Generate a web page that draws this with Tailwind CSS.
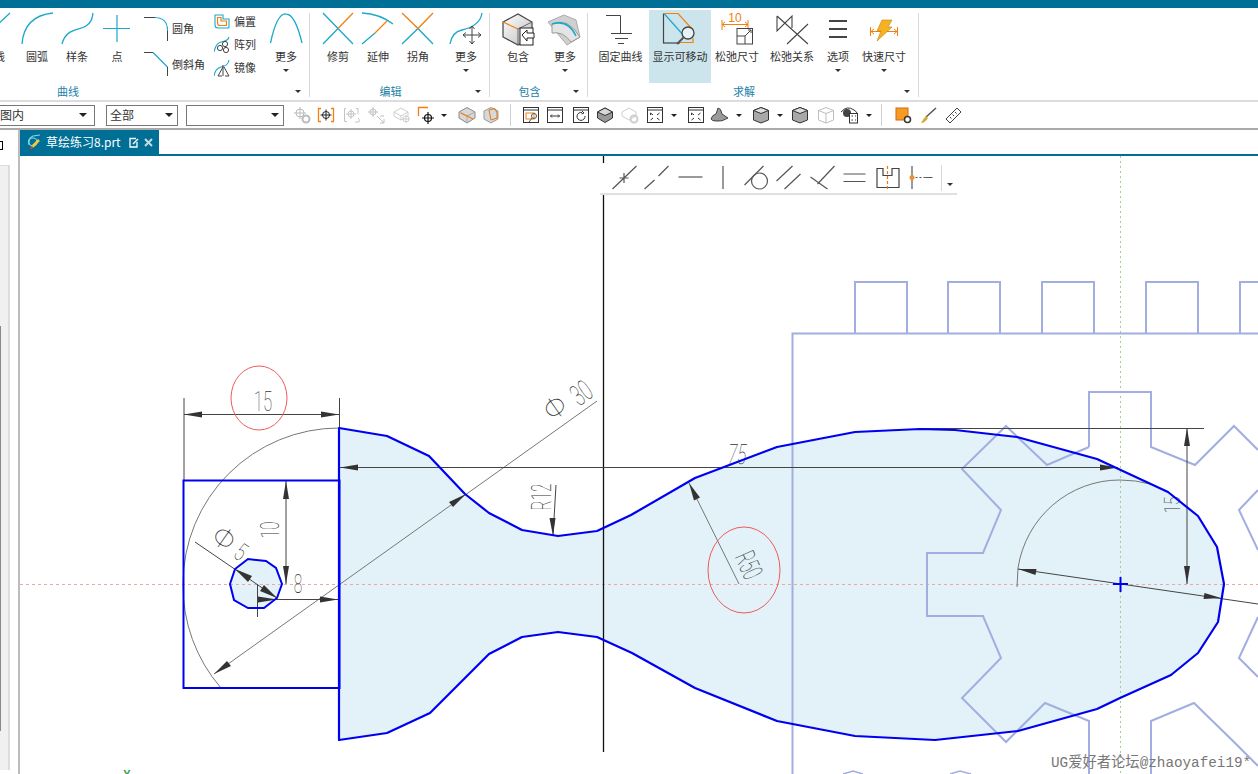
<!DOCTYPE html>
<html lang="zh-CN">
<head>
    <meta charset="UTF-8">
    <title>草绘练习8.prt</title>
    <script src="https://cdn.jsdelivr.net/npm/@tailwindcss/browser@4"></script>
</head>
<body class="bg-white">
<div class="w-[1258px] h-[774px] overflow-hidden flex flex-col bg-white text-[11px] leading-none text-[#333] font-['Noto_Sans_CJK_SC','Noto_Sans',sans-serif]">
    <div class="h-2 shrink-0 bg-[#006f96]"></div>

    <!-- ribbon -->
    <div class="h-[94px] shrink-0 flex border-b-2 border-[#dcdcdc] bg-white">
        <!-- 曲线 -->
        <div class="w-[464px] ml-[-155px] shrink-0 h-[90px] mt-[2px] flex flex-col relative">
            <div class="h-[73px] shrink-0 flex justify-end">
                <div class="w-[46px] flex flex-col items-center">
                    <svg class="w-[46px] h-[38px]" viewBox="-29 10 46 38" fill="none"><path d="M-4 26 L10 13" stroke="#1aa8cc" stroke-width="1.3"/></svg>
                    <span class="h-[16px] leading-[16px]">直线</span>
                </div>
                <div class="w-10 flex flex-col items-center">
                    <svg class="w-10 h-[38px]" viewBox="17 10 40 38" fill="none"><path d="M22 44 Q24 16 53 13" stroke="#1aa8cc" stroke-width="1.3"/></svg>
                    <span class="h-[16px] leading-[16px]">圆弧</span>
                </div>
                <div class="w-10 flex flex-col items-center">
                    <svg class="w-10 h-[38px]" viewBox="57 10 40 38" fill="none"><path d="M62 44 C66 28 80 30 86 26 C92 22 92 18 93 13" stroke="#1aa8cc" stroke-width="1.3"/></svg>
                    <span class="h-[16px] leading-[16px]">样条</span>
                </div>
                <div class="w-10 flex flex-col items-center">
                    <svg class="w-10 h-[38px]" viewBox="97 10 40 38" fill="none"><path d="M103 28.500 H130 M117 15 V42" stroke="#1aa8cc" stroke-width="1.2"/></svg>
                    <span class="h-[16px] leading-[16px]">点</span>
                </div>
                <div class="w-[77px] flex flex-col">
                    <div class="h-[35px] flex items-center pl-[7px] pt-[2px]">
                        <svg class="w-[24px] h-[26px] shrink-0" viewBox="144 16 24 26" fill="none"><path d="M144 17.500 H155" stroke="#444"/><path d="M155 17.500 Q168 18 167.500 31" stroke="#1aa8cc" stroke-width="1.2"/><path d="M167.500 31 V41" stroke="#444"/></svg>
                        <span class="ml-[4px]">圆角</span>
                    </div>
                    <div class="h-[35px] flex items-center pl-[7px] pt-[3px]">
                        <svg class="w-[24px] h-[26px] shrink-0" viewBox="144 51 24 26" fill="none"><path d="M144 52.500 H153" stroke="#444"/><path d="M153 52.500 L167.500 67" stroke="#1aa8cc" stroke-width="1.2"/><path d="M167.500 67 V76" stroke="#444"/></svg>
                        <span class="ml-[4px]">倒斜角</span>
                    </div>
                </div>
                <div class="w-[52px] flex flex-col">
                    <div class="h-[23px] flex items-center">
                        <svg class="w-[16px] h-[16px] shrink-0" viewBox="214 14 16 16" fill="none"><path d="M215 15 H223 V19 H229 V27 Q229 28 228 28 H218 Q215 28 215 25 Z" stroke="#1aa8cc" stroke-width="1.1"/><path d="M217.500 17.500 H221 V21 H226.500 V25.500 H220 Q217.500 25.500 217.500 23 Z" stroke="#f08010" stroke-width="1.2"/></svg>
                        <span class="ml-[4px]">偏置</span>
                    </div>
                    <div class="h-[23px] flex items-center">
                        <svg class="w-[16px] h-[18px] shrink-0" viewBox="214 35 16 18" fill="none"><path d="M214 51 Q216 42 221 41 Q228 40 229 36" stroke="#1aa8cc" stroke-width="1.1"/><g stroke="#444"><circle cx="225" cy="43" r="2.600"/><circle cx="220" cy="47" r="2.600"/><circle cx="226" cy="49" r="2.600"/></g></svg>
                        <span class="ml-[4px]">阵列</span>
                    </div>
                    <div class="h-[23px] flex items-center">
                        <svg class="w-[16px] h-[18px] shrink-0" viewBox="214 58 16 18" fill="none"><path d="M214 75 Q215 68 221 66 Q228 65 229 59" stroke="#1aa8cc" stroke-width="1.1"/><path d="M223 64 V75 M223 66 L218 75 H222 M224 66 L229 75 H225" stroke="#444"/></svg>
                        <span class="ml-[4px]">镜像</span>
                    </div>
                </div>
                <div class="w-10 flex flex-col items-center">
                    <svg class="w-10 h-[38px]" viewBox="266 10 40 38" fill="none"><path d="M270.500 43 Q277 13 286 14 Q295 14 302 43" stroke="#1aa8cc" stroke-width="1.3"/></svg>
                    <span class="h-[16px] leading-[16px]">更多</span>
                    <span class="mt-[5px] w-0 h-0 border-x-[3px] border-x-transparent border-t-[3px] border-t-[#333]"></span>
                </div>
                <div class="w-[3px]"></div>
            </div>
            <div class="pr-[18px] text-center text-[#1b7fa6] leading-[16px]">曲线</div>
            <span class="absolute right-[8px] top-[80px] w-0 h-0 border-x-[3.500px] border-x-transparent border-t-[3.500px] border-t-[#333]"></span>
        </div>
        <div class="w-px h-[84px] mt-[5px] bg-[#d8d8d8] shrink-0"></div>

        <!-- 编辑 -->
        <div class="w-[179px] shrink-0 h-[90px] mt-[2px] flex flex-col relative">
            <div class="h-[73px] shrink-0 flex pl-2">
                <div class="w-10 flex flex-col items-center">
                    <svg class="w-10 h-[38px]" viewBox="318 10 40 38" fill="none" stroke-width="1.300"><path d="M323 13 L353 44 M323 44 L338 28.500" stroke="#1aa8cc"/><path d="M338 28.500 L353 13" stroke="#f08010"/></svg>
                    <span class="h-[16px] leading-[16px]">修剪</span>
                </div>
                <div class="w-10 flex flex-col items-center">
                    <svg class="w-10 h-[38px]" viewBox="358 10 40 38" fill="none" stroke-width="1.300"><path d="M362 13 Q380 14 393 24 M362 44 L375 33" stroke="#1aa8cc"/><path d="M375 33 L387 21" stroke="#f08010"/></svg>
                    <span class="h-[16px] leading-[16px]">延伸</span>
                </div>
                <div class="w-10 flex flex-col items-center">
                    <svg class="w-10 h-[38px]" viewBox="398 10 40 38" fill="none" stroke-width="1.300"><path d="M402 44 L418 28.500 L433 44" stroke="#1aa8cc"/><path d="M402 13 L418 28.500 L433 13" stroke="#f08010"/></svg>
                    <span class="h-[16px] leading-[16px]">拐角</span>
                </div>
                <div class="w-11 ml-[6px] flex flex-col items-center">
                    <svg class="w-11 h-[38px]" viewBox="444 10 44 38" fill="none"><path d="M450 44 Q452 32 462 30 Q480 26 482 13" stroke="#1aa8cc" stroke-width="1.3"/><path d="M472 26 V44 M463 35 H481 M469.500 29 L472 26 L474.500 29 M469.500 41 L472 44 L474.500 41 M466 32.500 L463 35 L466 37.500 M478 32.500 L481 35 L478 37.500" stroke="#444" stroke-width="1"/></svg>
                    <span class="h-[16px] leading-[16px]">更多</span>
                    <span class="mt-[5px] w-0 h-0 border-x-[3px] border-x-transparent border-t-[3px] border-t-[#333]"></span>
                </div>
            </div>
            <div class="pr-[18px] text-center text-[#1b7fa6] leading-[16px]">编辑</div>
            <span class="absolute right-[8px] top-[80px] w-0 h-0 border-x-[3.500px] border-x-transparent border-t-[3.500px] border-t-[#333]"></span>
        </div>
        <div class="w-px h-[84px] mt-[5px] bg-[#d8d8d8] shrink-0"></div>

        <!-- 包含 -->
        <div class="w-[97px] shrink-0 h-[90px] mt-[2px] flex flex-col relative">
            <div class="h-[73px] shrink-0 flex pl-[6px]">
                <div class="w-11 flex flex-col items-center">
                    <svg class="w-11 h-[38px]" viewBox="496 10 44 38" fill="none">
                        <defs><linearGradient id="cube" x1="0" y1="0" x2="1" y2="1"><stop offset="0" stop-color="#fff"/><stop offset="1" stop-color="#bdbdbd"/></linearGradient></defs>
                        <path d="M503 22 L518 14 L532 22 V37 L518 45 L503 37 Z" fill="url(#cube)" stroke="#444" stroke-width="1.200"/>
                        <path d="M503 22 L518 29" stroke="#f08010" stroke-width="1.200"/>
                        <path d="M518 29 L532 22 M518 29 V45" stroke="#666"/>
                        <rect x="520" y="28" width="13" height="17" fill="#fff" stroke="#222"/>
                        <path d="M522 35 L527 30 V33 H534 V38 H527 V41 Z" fill="#fff" stroke="#222"/>
                    </svg>
                    <span class="h-[16px] leading-[16px]">包含</span>
                </div>
                <div class="w-11 ml-[3px] flex flex-col items-center">
                    <svg class="w-11 h-[38px]" viewBox="543 10 44 38" fill="none">
                        <path d="M548 22 L564 15 L576 20 L580 37 L567 45 Z" fill="#d0d0d0" stroke="#aaa"/>
                        <path d="M552 24 Q568 17 580 37 L571 42 Q563 31 552 33 Z" fill="#e4e4e4" stroke="#999"/>
                        <path d="M552 24 Q568 19 576 36" stroke="#1aa8cc" stroke-width="1.500"/>
                    </svg>
                    <span class="h-[16px] leading-[16px]">更多</span>
                    <span class="mt-[5px] w-0 h-0 border-x-[3px] border-x-transparent border-t-[3px] border-t-[#333]"></span>
                </div>
            </div>
            <div class="pr-[18px] text-center text-[#1b7fa6] leading-[16px]">包含</div>
            <span class="absolute right-[8px] top-[80px] w-0 h-0 border-x-[3.500px] border-x-transparent border-t-[3.500px] border-t-[#333]"></span>
        </div>
        <div class="w-px h-[84px] mt-[5px] bg-[#d8d8d8] shrink-0"></div>

        <!-- 求解 -->
        <div class="w-[330px] shrink-0 h-[90px] mt-[2px] flex flex-col relative">
            <div class="h-[73px] shrink-0 flex pl-[4px]">
                <div class="w-[57px] flex flex-col items-center">
                    <svg class="w-[57px] h-[38px]" viewBox="592 10 57 38" fill="none" stroke="#444"><path d="M606 15.500 H620.500 V33 M611 33.500 H632 M615 38.500 H628 M618 43.500 H624"/></svg>
                    <span class="h-[16px] leading-[16px]">固定曲线</span>
                </div>
                <div class="w-[62px] flex flex-col items-center bg-[#cce4ec]">
                    <svg class="w-[62px] h-[38px]" viewBox="649 10 62 38" fill="none">
                        <path d="M663.500 43.500 V13.500" stroke="#444" stroke-width="1.200"/>
                        <path d="M664 13.500 L685 37" stroke="#1aa8cc" stroke-width="1.200"/>
                        <path d="M664 13.500 H678 L693 30" stroke="#f08010" stroke-width="1.200"/>
                        <path d="M663.500 43 H680" stroke="#444" stroke-width="1.200"/>
                        <path d="M680 42.500 H693 V38" stroke="#f08010" stroke-width="1.200"/>
                        <circle cx="688" cy="33" r="6" fill="#e8f2f5" stroke="#444" stroke-width="1.300"/>
                        <path d="M683.500 37.500 L677 44" stroke="#555" stroke-width="2"/>
                    </svg>
                    <span class="h-[16px] leading-[16px]">显示可移动</span>
                </div>
                <div class="w-[52px] flex flex-col items-center">
                    <svg class="w-[52px] h-[38px]" viewBox="711 10 52 38" fill="none">
                        <path d="M722 20 V30 M748 20 V30 M722 24.500 H748 M725 22 L722 24.500 L725 27 M745 22 L748 24.500 L745 27" stroke="#f08010"/>
                        <text x="735" y="22" font-size="12" fill="#f08010" text-anchor="middle" font-family="Liberation Sans">10</text>
                        <rect x="737" y="28.500" width="15.500" height="15.500" fill="#fff" stroke="#444"/>
                        <path d="M737 36 H745 V44 M745 36 L751 30 M748 30 H751 V33" stroke="#444"/>
                    </svg>
                    <span class="h-[16px] leading-[16px]">松弛尺寸</span>
                </div>
                <div class="w-[58px] flex flex-col items-center">
                    <svg class="w-[58px] h-[38px]" viewBox="763 10 58 38" fill="none" stroke="#444" stroke-width="1.100"><path d="M777 16 V31 L792 16 V28 M777 16 L808 44 M787 44 L808 24"/></svg>
                    <span class="h-[16px] leading-[16px]">松弛关系</span>
                </div>
                <div class="w-[34px] flex flex-col items-center">
                    <svg class="w-[34px] h-[38px]" viewBox="821 10 34 38" fill="none" stroke="#444" stroke-width="2"><path d="M829 21 H847 M829 29 H847 M829 37 H847"/></svg>
                    <span class="h-[16px] leading-[16px] whitespace-nowrap">选项</span>
                    <span class="mt-[5px] w-0 h-0 border-x-[3px] border-x-transparent border-t-[3px] border-t-[#333]"></span>
                </div>
                <div class="w-[58px] flex flex-col items-center">
                    <svg class="w-[58px] h-[38px]" viewBox="855 10 58 38" fill="none">
                        <path d="M870.500 27 V36 M897.500 27 V36 M871 31.500 H897 M874 29 L871 31.500 L874 34 M894 29 L897 31.500 L894 34" stroke="#f08010"/>
                        <path d="M882 20 H892 L888 27 H892 L877 41 L881 31 H877 Z" fill="#f5b324" stroke="#c08010" stroke-width="0.600"/>
                    </svg>
                    <span class="h-[16px] leading-[16px]">快速尺寸</span>
                    <span class="mt-[5px] w-0 h-0 border-x-[3px] border-x-transparent border-t-[3px] border-t-[#333]"></span>
                </div>
            </div>
            <div class="pr-[18px] text-center text-[#1b7fa6] leading-[16px]">求解</div>
            <span class="absolute right-[8px] top-[80px] w-0 h-0 border-x-[3.500px] border-x-transparent border-t-[3.500px] border-t-[#333]"></span>
        </div>
        <div class="w-px h-[84px] mt-[5px] bg-[#d8d8d8] shrink-0"></div>
    </div>

    <!-- toolbar -->
    <div class="h-[28px] shrink-0 flex items-center border-b-2 border-[#aaa] bg-white">
        <div class="w-[106px] h-[21px] ml-[-11px] shrink-0 flex items-center justify-between border-[1.500px] border-[#777] pl-[10px] pr-[7px] text-[12px]">图内<span class="w-0 h-0 border-x-[4px] border-x-transparent border-t-[4px] border-t-[#222]"></span></div>
        <div class="w-[72px] h-[21px] ml-[11px] shrink-0 flex items-center justify-between border-[1.500px] border-[#777] pl-[3px] pr-[4px] text-[12px]">全部<span class="w-0 h-0 border-x-[4px] border-x-transparent border-t-[4px] border-t-[#222]"></span></div>
        <div class="w-[98px] h-[21px] ml-[8px] shrink-0 flex items-center justify-end border-[1.500px] border-[#777] pr-[4px]"><span class="w-0 h-0 border-x-[4px] border-x-transparent border-t-[4px] border-t-[#222]"></span></div>

        <svg class="w-5 h-5 ml-[8px] shrink-0" viewBox="0 0 20 20" fill="none" stroke="#bbb"><circle cx="8" cy="8" r="4"/><path d="M8 2 V14 M2 8 H14"/><circle cx="14" cy="14" r="3.500" stroke-width="2"/></svg>
        <svg class="w-5 h-5 ml-[4px] shrink-0" viewBox="0 0 20 20" fill="none"><path d="M5 3.500 H2.500 V16.500 H5 M15 3.500 H17.500 V16.500 H15" stroke="#f08010" stroke-width="1.300"/><circle cx="10" cy="10" r="3.500" stroke="#222"/><path d="M10 4.500 V15.500 M4.500 10 H15.500" stroke="#222"/></svg>
        <svg class="w-5 h-5 ml-[6px] shrink-0" viewBox="0 0 20 20" fill="none" stroke="#c4c4c4"><path d="M4 3.500 H2.500 V16.500 H5 M14 3.500 H16 V9"/><circle cx="9" cy="9" r="3"/><path d="M9 4 V14 M4 9 H14 M13 17 H17 Q18 14 16 13"/></svg>
        <svg class="w-5 h-5 ml-[4px] shrink-0" viewBox="0 0 20 20" fill="none" stroke="#c0c0c0"><circle cx="7" cy="7" r="3"/><path d="M7 2 V12 M2 7 H12 M11 11 L18 18 M18 14 V18 H14 M14 11 H18"/></svg>
        <svg class="w-5 h-5 ml-[6px] shrink-0" viewBox="0 0 20 20" fill="none" stroke="#cfcfcf"><path d="M2 7 L9 3 L16 7 V11 L9 15 L2 11 Z M2 7 L9 11 L16 7 M9 11 V15"/><circle cx="14" cy="14" r="3" fill="#fff"/><path d="M14 10 V18 M10 14 H18"/></svg>
        <svg class="w-5 h-5 ml-[4px] shrink-0" viewBox="0 0 20 20" fill="none"><path d="M2.500 11 V2.500 H12" stroke="#f08010" stroke-width="1.300"/><circle cx="12" cy="13" r="3.500" stroke="#111" stroke-width="1.200"/><path d="M12 7 V19 M6 13 H18" stroke="#111" stroke-width="1.200"/></svg>
        <span class="ml-[5px] w-0 h-0 shrink-0 border-x-[3px] border-x-transparent border-t-[3px] border-t-[#222]"></span>
        <svg class="w-5 h-5 ml-[10px] shrink-0" viewBox="0 0 20 20"><path d="M2 7 L10 2.500 L18 7 V13 L10 18 L2 13 Z" fill="#d8d8d8" stroke="#888"/><path d="M2 7 L10 11 L18 7 M10 11 V18" fill="none" stroke="#aaa"/><path d="M4 8 L16 14" stroke="#f08010" stroke-width="1.300"/></svg>
        <svg class="w-5 h-5 ml-[4px] shrink-0" viewBox="0 0 20 20"><path d="M3 6 L10 2.500 L17 6 V14 L10 18 L3 14 Z" fill="#d8d8d8" stroke="#999"/><path d="M8 5 L14 3.500 L16 8 V13 L10 15 Z" fill="none" stroke="#e07818"/></svg>
        <div class="w-px h-[22px] ml-[9px] shrink-0 bg-[#d0d0d0]"></div>
        <svg class="w-5 h-5 ml-[10px] shrink-0" viewBox="0 0 20 20" fill="none"><rect x="2.500" y="2.500" width="15" height="15" stroke="#333"/><path d="M2.500 5 H17.500" stroke="#333"/><rect x="5" y="8" width="8" height="6" stroke="#f08010"/><circle cx="13" cy="11" r="2.500" stroke="#555"/><path d="M11 13 L8 17" stroke="#555"/></svg>
        <svg class="w-5 h-5 ml-[4px] shrink-0" viewBox="0 0 20 20" fill="none" stroke="#333"><rect x="2.500" y="2.500" width="15" height="15"/><path d="M2.500 5 H17.500 M5.500 11 H14.500 M7 9.500 L5.500 11 L7 12.500 M13 9.500 L14.500 11 L13 12.500"/></svg>
        <svg class="w-5 h-5 ml-[6px] shrink-0" viewBox="0 0 20 20" fill="none" stroke="#333"><rect x="2.500" y="2.500" width="15" height="15"/><path d="M2.500 5 H17.500 M14 11 A4 4 0 1 1 11 7.500 M11 6 L13 8 L10.500 9"/></svg>
        <svg class="w-5 h-5 ml-[4px] shrink-0" viewBox="0 0 20 20"><path d="M2.500 7 L10 3 L17.500 7 V13 L10 17.500 L2.500 13 Z" fill="#999" stroke="#333"/><path d="M2.500 7 L10 10.500 L17.500 7 L10 3 Z" fill="#d8d8d8" stroke="#333"/></svg>
        <svg class="w-5 h-5 ml-[5px] shrink-0" viewBox="0 0 20 20" fill="none" stroke="#cfcfcf"><path d="M2 7 L9 3 L16 7 V11 L9 15 L2 11 Z"/><circle cx="14" cy="14" r="3.500" stroke-width="2"/></svg>
        <svg class="w-5 h-5 ml-[5px] shrink-0" viewBox="0 0 20 20" fill="none" stroke="#333"><rect x="2.500" y="2.500" width="15" height="15"/><path d="M2.500 5 H17.500 M5.500 8 L8 10 M5.500 8 V10 M14.500 8 L12 10 M5.500 15 L8 13 M14.500 15 L12 13"/></svg>
        <span class="ml-[6px] w-0 h-0 shrink-0 border-x-[3px] border-x-transparent border-t-[3px] border-t-[#222]"></span>
        <svg class="w-5 h-5 ml-[9px] shrink-0" viewBox="0 0 20 20" fill="none" stroke="#333"><rect x="2.500" y="2.500" width="15" height="15"/><path d="M2.500 5 H17.500 M5.500 8 L8 10 M5.500 8 V10 M14.500 8 L12 10 M5.500 15 L8 13 M14.500 15 L12 13"/></svg>
        <svg class="w-5 h-5 ml-[4px] shrink-0" viewBox="0 0 20 20"><path d="M1 14 Q2 10 6 9 L8 3 Q11 3 12 9 L18 13 Q12 17 6 16 Q2 16 1 14 Z" fill="#9a9a9a" stroke="#444"/></svg>
        <span class="ml-[6px] w-0 h-0 shrink-0 border-x-[3px] border-x-transparent border-t-[3px] border-t-[#222]"></span>
        <svg class="w-5 h-5 ml-[9px] shrink-0" viewBox="0 0 20 20"><path d="M2.500 5.500 L10 2.500 L17.500 5.500 V15 L10 18 L2.500 15 Z" fill="#a8a8a8" stroke="#333"/><path d="M2.500 5.500 L10 8.500 L17.500 5.500 L10 2.500 Z" fill="#ddd" stroke="#333"/></svg>
        <span class="ml-[6px] w-0 h-0 shrink-0 border-x-[3px] border-x-transparent border-t-[3px] border-t-[#222]"></span>
        <svg class="w-5 h-5 ml-[7px] shrink-0" viewBox="0 0 20 20"><path d="M2.500 5.500 L10 2.500 L17.500 5.500 V15 L10 18 L2.500 15 Z" fill="#a8a8a8" stroke="#333"/><path d="M2.500 5.500 L10 8.500 L17.500 5.500 L10 2.500 Z" fill="#ddd" stroke="#333"/></svg>
        <svg class="w-5 h-5 ml-[6px] shrink-0" viewBox="0 0 20 20" fill="none" stroke="#bdbdbd"><path d="M2.500 5.500 L10 2.500 L17.500 5.500 V15 L10 18 L2.500 15 Z M2.500 5.500 L10 8.500 L17.500 5.500 M10 8.500 V18"/></svg>
        <svg class="w-5 h-5 ml-[4px] shrink-0" viewBox="0 0 20 20" fill="none"><path d="M1 7 Q7 0 14 5 Q16 6 17 8" stroke="#333"/><circle cx="7" cy="8" r="4" fill="#444"/><rect x="9.500" y="8.500" width="8" height="9.500" fill="#fff" stroke="#333"/><path d="M11.500 11 H13 M11.500 15 H13 M15 11 H16 M15 15 H16" stroke="#333"/></svg>
        <span class="ml-[6px] w-0 h-0 shrink-0 border-x-[3px] border-x-transparent border-t-[3px] border-t-[#222]"></span>
        <div class="w-px h-[22px] ml-[9px] shrink-0 bg-[#d0d0d0]"></div>
        <svg class="w-5 h-5 ml-[11px] shrink-0" viewBox="0 0 20 20"><rect x="3" y="3" width="12" height="12" fill="#f59a23" stroke="#d06a10"/><circle cx="14.500" cy="14.500" r="3" fill="#fff" stroke="#333" stroke-width="1.500"/></svg>
        <svg class="w-5 h-5 ml-[5px] shrink-0" viewBox="0 0 20 20" fill="none"><path d="M18 3 L8 12" stroke="#555" stroke-width="1.500"/><path d="M8 11 L10 13 Q7 18 3 18 Q5 14 8 11 Z" fill="#d8a830"/></svg>
        <svg class="w-5 h-5 ml-[5px] shrink-0" viewBox="0 0 20 20" fill="none" stroke="#444"><path d="M14 3 L18 7 L7 18 L3 14 Z M12 7 L13.500 8.500 M9.500 9.500 L11 11 M7 12 L8.500 13.500"/></svg>
    </div>

    <!-- body -->
    <div class="flex-1 min-h-0 flex">
        <!-- collapsed left panel -->
        <div class="w-5 shrink-0 border-r-2 border-[#bdbdbd] flex flex-col bg-white">
            <div class="h-[22px] pt-[11px]"><div class="w-[3px] h-[9px] border-y border-r border-black"></div></div>
            <div class="flex-1 w-[10px] mb-[4px] mt-[13px] border-t border-r-2 border-[#dcdcdc] bg-[#f0f0f0] flex flex-col">
                <div class="h-[160px]"></div>
                <div class="w-px h-[405px] bg-[#888]"></div>
            </div>
        </div>

        <div class="flex-1 min-w-0 flex flex-col">
            <!-- tab strip -->
            <div class="h-[26px] shrink-0 border-b-2 border-[#006f96] flex">
                <div class="w-[139px] bg-[#006f96] flex items-center text-white text-[12px] pl-[6px]">
                    <svg class="w-[16px] h-[16px] shrink-0" viewBox="0 0 16 16" fill="none"><path d="M3 11 Q1 5 7 2 L14 1" stroke="#7fd8ee" stroke-width="1.100"/><circle cx="7" cy="8" r="4" stroke="#7fd8ee" stroke-width="1.100"/><path d="M13 6 L6 13" stroke="#f5c842" stroke-width="2.500"/><path d="M6.500 12.500 L4.500 15" stroke="#e04030" stroke-width="1.500"/></svg>
                    <span class="ml-[4px] whitespace-nowrap">草绘练习8.prt</span>
                    <svg class="w-[10px] h-[11px] ml-[8px] shrink-0" viewBox="0 0 10 11" fill="none"><path d="M7 1.500 H1 V10 H8 V5" stroke="#fff" stroke-width="1.300"/><path d="M4 7 L9 2" stroke="#fff" stroke-width="1.500"/></svg>
                    <svg class="w-[9px] h-[9px] ml-[5px] shrink-0" viewBox="0 0 9 9"><path d="M1 1 L8 8 M8 1 L1 8" stroke="#c8dbe3" stroke-width="2"/></svg>
                </div>
            </div>

            <!-- graphics window, drawing coordinates are screen pixels -->
            <div class="flex-1 min-h-0 relative overflow-hidden bg-white">
                <svg class="absolute inset-0 w-[1238px] h-[618px]" viewBox="20 156 1238 618" fill="none">
                    <!-- swept profile fill -->
                    <path d="M339 428 L387 436 L429 456 L465 494 L489 513 L522 530 L558 536 L597 531 L631 515 L695 478 L777 447 L855 432 L920 429 L955 430 L1017 437 L1097 459 L1168 492 L1198 516 L1217 547 L1224 584 L1218 622 L1198 653 L1171 675 L1120 698 L1097 709 L1018 731 L935 740 L855 736 L777 721 L695 688 L632 653 L597 637 L558 632 L522 637 L489 654 L430 713 L387 733 L339 740 Z" fill="#e2f2f8"/>
                    <polygon points="230,584 235,569 248,559 266,561 276,568 282,584 277,598 264,608 248,608 234,600" fill="#e2f2f8"/>

                    <!-- centre lines -->
                    <path d="M20 584.500 H1258" stroke="#f3a5a5" stroke-dasharray="3 3"/>
                    <path d="M1120.500 156 V774" stroke="#a5cc98" stroke-dasharray="2 3"/>

                    <!-- reference gear, lavender -->
                    <g stroke="#a3aee0" stroke-width="2">
                        <path d="M792.500 774 V333.500 H1258"/>
                        <path d="M855 333 V282 H907 V333 M948 333 V282 H1000 V333 M1042 333 V282 H1094 V333 M1146 333 V282 H1198 V333 M1240 333 V282 H1258"/>
                        <path d="M1089 447 V392 H1151 V447 L1195 465 L1234 426 L1258 450 M1258 490 L1239 510 L1258 550 M1258 617 L1239 658 L1258 677 M1258 766 L1234 742 L1194 703 L1151 721 V774 M1089 774 V721 L1045 703 L1006 742 L962 698 L1001 658 L983 616 H927 V553 H983 L1001 510 L962 469 L1006 426 L1047 465 L1089 447"/>
                        <path d="M843 774 L853 771 L863 774 M950 774 L960 771 L971 774" stroke-width="1.500"/>
                    </g>

                    <!-- vertical axis -->
                    <path d="M603.500 156 V752" stroke="#111" stroke-width="1.300"/>

                    <!-- thin construction arcs -->
                    <g stroke="#777">
                        <path d="M339 428 A156 156 0 0 0 183 584 A156 156 0 0 0 221 688"/>
                        <path d="M1017 587 L1018 568 A103 104 0 0 1 1120 480 Q1136 480 1150 484"/>
                        <path d="M597 401 L214 674"/>
                        <path d="M689 483 L739 584"/>
                    </g>

                    <!-- dimension lines -->
                    <g stroke="#444">
                        <path d="M184 398 V480 M339.500 398 V428 M184 414.500 H339"/>
                        <path d="M286 481 V584"/>
                        <path d="M257 599.500 H339 M257.500 584 V617"/>
                        <path d="M195 542 L277 598"/>
                        <path d="M339 467.500 H1118"/>
                        <path d="M556 485 L553 536"/>
                        <path d="M1018 569 L1258 604"/>
                        <path d="M920 428.500 H1204 M1187 428 V584"/>
                    </g>
                    <g fill="#333">
                        <polygon points="184,414.500 202,411.500 202,417.500"/>
                        <polygon points="339,414.500 321,411.500 321,417.500"/>
                        <polygon points="286,481 283,499 289,499"/>
                        <polygon points="286,584 283,566 289,566"/>
                        <polygon points="277,599.500 258,596.500 258,602.500"/>
                        <polygon points="338,599.500 320,596.500 320,602.500"/>
                        <polygon points="235,569 248,582 252,576"/>
                        <polygon points="277,598 260,591 264,585"/>
                        <polygon points="466,494 453,507 449,502"/>
                        <polygon points="214,674 231,666 227,661"/>
                        <polygon points="340,467.500 358,464.500 358,470.500"/>
                        <polygon points="1118,467.500 1100,464.500 1100,470.500"/>
                        <polygon points="553,536 549.500,518 555.500,518"/>
                        <polygon points="689,483 700,497.400 694,500.600"/>
                        <polygon points="1018,569 1036.500,569 1035.500,575"/>
                        <polygon points="1221,598 1204.500,593 1203.500,599"/>
                        <polygon points="1187,428 1184,446 1190,446"/>
                        <polygon points="1187,584 1184,566 1190,566"/>
                    </g>

                    <!-- dimension values -->
                    <g fill="#333" font-family="Roboto" font-weight="100" text-anchor="middle">
                        <text transform="translate(263,411) scale(.6,1)" font-size="28">15</text>
                        <text transform="translate(279,530) rotate(-90) scale(.62,1)" font-size="25">10</text>
                        <text transform="translate(298,593) scale(.6,1)" font-size="26">8</text>
                        <text transform="translate(218,547) rotate(35)" font-size="30">Φ</text>
                        <text transform="translate(236,559) rotate(35) scale(.7,1)" font-size="25">5</text>
                        <text transform="translate(561,416) rotate(-35)" font-size="30">Φ</text>
                        <text transform="translate(587,401) rotate(-35) scale(.62,1)" font-size="29">30</text>
                        <text transform="translate(736,464) skewX(-8) scale(.6,1)" font-size="28">75</text>
                        <text transform="translate(551,497) rotate(-90) scale(.55,1)" font-size="28">R12</text>
                        <text transform="translate(740,569) rotate(66) scale(.55,1)" font-size="28">R50</text>
                        <text transform="translate(1180,505) rotate(-90) scale(.7,1)" font-size="22">15</text>
                    </g>

                    <!-- circled values, red -->
                    <ellipse cx="259" cy="398" rx="28" ry="32" stroke="#f05a5a"/>
                    <ellipse cx="744" cy="570" rx="36" ry="43" stroke="#f05a5a"/>

                    <!-- blue sketch curves -->
                    <path d="M339 428 L387 436 L429 456 L465 494 L489 513 L522 530 L558 536 L597 531 L631 515 L695 478 L777 447 L855 432 L920 429 L955 430 L1017 437 L1097 459 L1168 492 L1198 516 L1217 547 L1224 584 L1218 622 L1198 653 L1171 675 L1120 698 L1097 709 L1018 731 L935 740 L855 736 L777 721 L695 688 L632 653 L597 637 L558 632 L522 637 L489 654 L430 713 L387 733 L339 740 Z" stroke="#0000f0" stroke-width="2.200" stroke-linejoin="round"/>
                    <polygon points="230,584 235,569 248,559 266,561 276,568 282,584 277,598 264,608 248,608 234,600" stroke="#0000f0" stroke-width="2"/>
                    <rect x="183.500" y="480.500" width="156" height="207.500" stroke="#0000f0" stroke-width="2"/>
                    <path d="M1113 584 H1128 M1120.500 577 V592" stroke="#0000f0" stroke-width="2"/>

                    <text x="127" y="778" fill="#2ea043" font-size="11" font-weight="700" text-anchor="middle" font-family="Liberation Sans">Y</text>
                    <text x="1051" y="767" fill="#777" font-size="14.300" font-family="Liberation Mono,Noto Sans CJK SC,monospace">UG爱好者论坛@zhaoyafei19*</text>
                </svg>

                <!-- floating constraint bar -->
                <div class="absolute left-[580px] top-[7px] w-[357px] h-[32px] flex items-center pl-[8px] bg-white border-b-2 border-[#e0e0e0]">
                    <svg class="w-[33px] h-[28px] shrink-0" viewBox="608.500 164 33 28" fill="none" stroke="#555" stroke-width="1.200"><path d="M613 189 L637 166 M620 178 H629 M624.500 173 V183"/></svg>
                    <svg class="w-[33px] h-[28px] shrink-0" viewBox="641.500 164 33 28" fill="none" stroke="#555" stroke-width="1.200"><path d="M645 189 L655 180 M659 176 L669 166"/></svg>
                    <svg class="w-[33px] h-[28px] shrink-0" viewBox="674.500 164 33 28" fill="none" stroke="#555" stroke-width="1.200"><path d="M679 177 H703"/></svg>
                    <svg class="w-[33px] h-[28px] shrink-0" viewBox="707.500 164 33 28" fill="none" stroke="#555" stroke-width="1.200"><path d="M723.500 166 V189"/></svg>
                    <svg class="w-[33px] h-[28px] shrink-0" viewBox="740.500 164 33 28" fill="none" stroke="#555" stroke-width="1.200"><path d="M745 185 L764 166"/><circle cx="760" cy="181" r="8"/></svg>
                    <svg class="w-[33px] h-[28px] shrink-0" viewBox="773.500 164 33 28" fill="none" stroke="#555" stroke-width="1.200"><path d="M777 181 L793 166 M785 189 L801 174"/></svg>
                    <svg class="w-[33px] h-[28px] shrink-0" viewBox="806.500 164 33 28" fill="none" stroke="#555" stroke-width="1.200"><path d="M811 177 L828 189 M818 184 L835 166"/></svg>
                    <svg class="w-[33px] h-[28px] shrink-0" viewBox="839.500 164 33 28" fill="none" stroke="#555" stroke-width="1.200"><path d="M844 174 H866 M844 181.500 H866"/></svg>
                    <svg class="w-[33px] h-[28px] shrink-0" viewBox="872.500 164 33 28" fill="none"><path d="M877.500 168.500 H883.500 V175.500 H892.500 V168.500 H899.500 V187.500 H877.500 Z" stroke="#444" stroke-width="1.200"/><path d="M888 166 V189" stroke="#e87810" stroke-width="1.200" stroke-dasharray="3 2"/></svg>
                    <svg class="w-[33px] h-[28px] shrink-0" viewBox="905.500 164 33 28" fill="none"><path d="M912.500 166 V189" stroke="#555" stroke-width="1.200"/><path d="M916 177.500 H926" stroke="#555" stroke-dasharray="2 2"/><path d="M926 177.500 H933" stroke="#555"/><circle cx="912.500" cy="177.500" r="2.500" fill="#f09030"/></svg>
                    <div class="w-px h-[26px] ml-[3px] shrink-0 bg-[#d8d8d8]"></div>
                    <span class="ml-[5px] mt-[12px] w-0 h-0 shrink-0 border-x-[3px] border-x-transparent border-t-[3px] border-t-[#333]"></span>
                </div>
            </div>
        </div>
    </div>
</div>
</body>
</html>
